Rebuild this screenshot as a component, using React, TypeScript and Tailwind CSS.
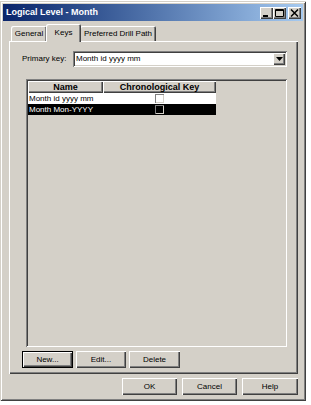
import React from "react";

const raised =
  "bg-[#d4d0c8] shadow-[inset_1px_1px_#fff,inset_-1px_-1px_#404040,inset_-2px_-2px_#808080]";
const sunken =
  "shadow-[inset_1px_1px_#808080,inset_-1px_-1px_#fff,inset_2px_2px_#404040,inset_-2px_-2px_#d4d0c8]";

const TitleButton: React.FC<{ kind: "min" | "max" | "close" }> = ({ kind }) => (
  <div className={`w-[13px] h-[12px] flex items-center justify-center ${raised}`}>
    <svg width="9" height="8" viewBox="0 0 9 8">
      {kind === "min" && <rect x="1" y="6" width="5" height="2" fill="#000" />}
      {kind === "max" && (
        <path d="M0.5 0.5h8v7h-8z M0.5 1.5h8" fill="none" stroke="#000" strokeWidth="1" />
      )}
      {kind === "close" && (
        <path d="M1 0.5l7 7M8 0.5l-7 7" stroke="#000" strokeWidth="1.5" />
      )}
    </svg>
  </div>
);

const Button: React.FC<{ label: string; w: string; isDefault?: boolean }> = ({
  label,
  w,
  isDefault,
}) => (
  <div
    className={`${w} h-[17px] flex items-center justify-center text-[8px] text-black ${
      isDefault
        ? "bg-[#d4d0c8] border border-black shadow-[inset_1px_1px_#fff,inset_-1px_-1px_#404040,inset_-2px_-2px_#808080]"
        : raised
    }`}
  >
    {label}
  </div>
);

const Checkbox: React.FC<{ dark?: boolean }> = ({ dark }) => (
  <div
    className={`w-[9px] h-[9px] ${
      dark ? "bg-black" : "bg-white"
    } shadow-[inset_1px_1px_#808080,inset_-1px_-1px_#d4d0c8]`}
  />
);

const rows = [
  { name: "Month id yyyy mm", selected: false },
  { name: "Month Mon-YYYY", selected: true },
];

export default function App() {
  return (
    <div className="w-[311px] h-[405px] bg-white font-['Liberation_Sans',Arial,sans-serif] leading-none">
      <div
        id="dialog"
        className="w-[306px] h-[400px] mt-px bg-[#d4d0c8] p-[3px] flex flex-col shadow-[inset_1px_1px_#d4d0c8,inset_-1px_-1px_#404040,inset_2px_2px_#fff,inset_-2px_-2px_#808080]"
      >
        <div className="h-[17px] flex items-center justify-between pl-[3px] pr-[2px] bg-linear-to-r from-[#0a246a] to-[#a6caf0]">
          <span className="text-white font-bold text-[9px]">Logical Level - Month</span>
          <div className="flex items-center">
            <TitleButton kind="min" />
            <TitleButton kind="max" />
            <div className="w-[2px]" />
            <TitleButton kind="close" />
          </div>
        </div>

        <div className="mt-px h-[19px] pl-[8px] flex items-end text-[8px] text-black">
          <div className="w-[36px] h-[15px] flex items-center justify-center rounded-t-[2px] shadow-[inset_1px_1px_#fff,inset_-1px_0_#404040,inset_-2px_0_#808080]">
            General
          </div>
          <div className="relative z-10 w-[35px] h-[18px] -mb-px -mx-px pb-px flex items-center justify-center rounded-t-[2px] bg-[#d4d0c8] shadow-[inset_1px_1px_#fff,inset_-1px_0_#404040,inset_-2px_0_#808080]">
            Keys
          </div>
          <div className="w-[76px] h-[15px] flex items-center justify-center rounded-t-[2px] shadow-[inset_1px_1px_#fff,inset_-1px_0_#404040,inset_-2px_0_#808080]">
            Preferred Drill Path
          </div>
        </div>

        <div className="ml-[6px] w-[289px] h-[333px] flex flex-col shadow-[inset_1px_1px_#fff,inset_-1px_-1px_#404040,inset_-2px_-2px_#808080]">
          <div className="mt-[10px] pl-[13px] flex items-center h-[16px] text-[8px] text-black">
            <span className="w-[51px]">Primary key:</span>
            <div className={`w-[214px] h-[16px] bg-white flex items-center justify-between pl-[3px] pr-[2px] ${sunken}`}>
              <span>Month id yyyy mm</span>
              <div className={`w-[12px] h-[12px] flex items-center justify-center ${raised}`}>
                <svg width="7" height="4" viewBox="0 0 7 4">
                  <path d="M0 0h7l-3.5 4z" fill="#000" />
                </svg>
              </div>
            </div>
          </div>

          <div className={`mt-[12px] ml-[17px] w-[261px] h-[268px] p-[2px] bg-[#d4d0c8] ${sunken}`}>
            <div className="flex h-[12px] font-bold text-[9px] text-black">
              <div className={`w-[75px] flex items-center justify-center ${raised}`}>Name</div>
              <div className={`w-[113px] flex items-center justify-center ${raised}`}>
                Chronological Key
              </div>
            </div>
            {rows.map((r) => (
              <div
                key={r.name}
                className={`flex w-[188px] h-[11px] text-[8px] ${
                  r.selected ? "bg-black text-white" : "bg-white text-black"
                }`}
              >
                <div className="w-[75px] pl-px flex items-center">{r.name}</div>
                <div className="w-[113px] flex items-center justify-center">
                  <Checkbox dark={r.selected} />
                </div>
              </div>
            ))}
          </div>

          <div className="mt-[4px] ml-[13px] flex gap-[3px]">
            <Button label="New..." w="w-[51px]" isDefault />
            <Button label="Edit..." w="w-[50px]" />
            <Button label="Delete" w="w-[51px]" />
          </div>
        </div>

        <div className="mt-[4px] pr-[5px] flex justify-end gap-[5px]">
          <Button label="OK" w="w-[55px]" />
          <Button label="Cancel" w="w-[55px]" />
          <Button label="Help" w="w-[56px]" />
        </div>
      </div>
    </div>
  );
}
